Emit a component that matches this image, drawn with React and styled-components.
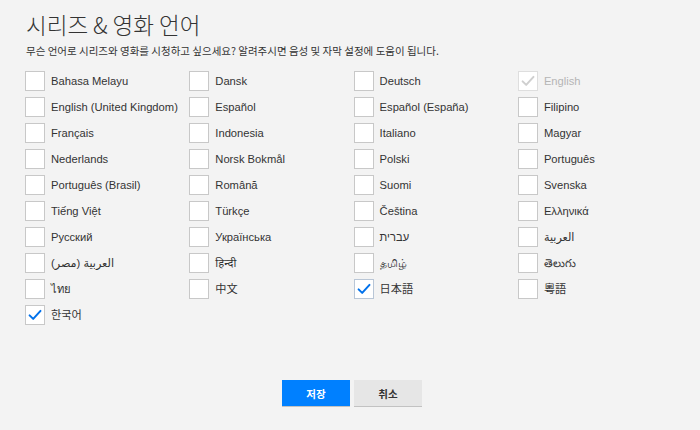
import React, { useState } from "react";
import styled, { createGlobalStyle } from "styled-components";

const GlobalStyle = createGlobalStyle`
  html, body {
    margin: 0;
    padding: 0;
    background: #f3f3f3;
  }
  body {
    font-family: "Liberation Sans", "Noto Sans", "Noto Sans CJK KR", "DejaVu Sans", sans-serif;
    color: #333;
  }
`;

const languages = [
  "Bahasa Melayu", "Dansk", "Deutsch", "English",
  "English (United Kingdom)", "Español", "Español (España)", "Filipino",
  "Français", "Indonesia", "Italiano", "Magyar",
  "Nederlands", "Norsk Bokmål", "Polski", "Português",
  "Português (Brasil)", "Română", "Suomi", "Svenska",
  "Tiếng Việt", "Türkçe", "Čeština", "Ελληνικά",
  "Русский", "Українська", "עברית", "العربية",
  "العربية (مصر)", "हिन्दी", "தமிழ்", "తెలుగు",
  "ไทย", "中文", "日本語", "粵語",
  "한국어",
];

function SettingsLanguages() {
  const [selected, setSelected] = useState(["English", "日本語", "한국어"]);

  const toggle = (lang) => {
    if (lang === "English") return;
    setSelected((prev) =>
      prev.includes(lang) ? prev.filter((l) => l !== lang) : [...prev, lang]
    );
  };

  return (
    <Page>
      <GlobalStyle />
      <Title>시리즈 &amp; 영화 언어</Title>
      <Subtitle>
        무슨 언어로 시리즈와 영화를 시청하고 싶으세요? 알려주시면 음성 및 자막 설정에 도움이 됩니다.
      </Subtitle>
      <Grid>
        {languages.map((lang) => {
          const disabled = lang === "English";
          const checked = selected.includes(lang);
          return (
            <Option key={lang} $disabled={disabled} onClick={() => toggle(lang)}>
              <Box $disabled={disabled} $focused={lang === "日本語"}>
                {checked && (
                  <svg width="16" height="16" viewBox="0 0 16 16">
                    <path
                      d="M2.6 8.4 L6.2 11.9 L13.5 3.9"
                      fill="none"
                      stroke={disabled ? "#cfcfcf" : "#0071eb"}
                      strokeWidth="2"
                      strokeLinecap="round"
                      strokeLinejoin="round"
                    />
                  </svg>
                )}
              </Box>
              <Label $disabled={disabled}>{lang}</Label>
            </Option>
          );
        })}
      </Grid>
      <Actions>
        <Button $primary>저장</Button>
        <Button>취소</Button>
      </Actions>
    </Page>
  );
}

const Page = styled.div`
  width: 700px;
  height: 430px;
  box-sizing: border-box;
  padding: 8px 18px 0 25px;
  display: flex;
  flex-direction: column;
`;

const Title = styled.h1`
  margin: 0 0 0 1px;
  font-family: "Noto Sans CJK KR", sans-serif;
  font-size: 22.5px;
  line-height: 32px;
  font-weight: 300;
  color: #333;
`;

const Subtitle = styled.p`
  margin: 3px 0 0 1px;
  font-family: "Noto Sans CJK KR", sans-serif;
  font-size: 10.5px;
  line-height: 16px;
  color: #333;
`;

const Grid = styled.div`
  margin-top: 12px;
  display: grid;
  grid-template-columns: repeat(4, 164.3px);
  row-gap: 6px;
`;

const Option = styled.label`
  display: flex;
  align-items: center;
  gap: 6px;
  height: 20px;
  cursor: ${(p) => (p.$disabled ? "default" : "pointer")};
`;

const Box = styled.span`
  width: 20px;
  height: 20px;
  box-sizing: border-box;
  flex: none;
  background: #fff;
  border: 1px solid
    ${(p) => (p.$disabled ? "#dedede" : p.$focused ? "#b9c6d6" : "#c8c8c8")};
  display: flex;
  align-items: center;
  justify-content: center;
`;

const Label = styled.span`
  font-size: 11.2px;
  line-height: 14px;
  color: ${(p) => (p.$disabled ? "#b5b5b5" : "#333")};
  white-space: nowrap;
`;

const Actions = styled.div`
  margin-top: 55px;
  display: flex;
  justify-content: center;
  gap: 4px;
  padding-right: 3px;
`;

const Button = styled.button`
  width: 68px;
  height: 26px;
  border: none;
  border-radius: 0;
  font-family: "Noto Sans CJK KR", sans-serif;
  font-size: 10.5px;
  font-weight: 700;
  color: ${(p) => (p.$primary ? "#fff" : "#333")};
  background: ${(p) => (p.$primary ? "#0080ff" : "#e6e6e6")};
  box-shadow: 0 1px 0 rgba(0, 0, 0, 0.2);
  cursor: pointer;
`;

export default function App() {
  return <SettingsLanguages />;
}
